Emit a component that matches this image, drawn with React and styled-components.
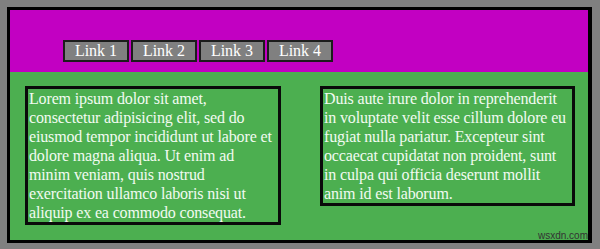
import React from 'react';
import styled, { createGlobalStyle } from 'styled-components';

const GlobalStyle = createGlobalStyle`
  html, body {
    margin: 0;
    padding: 0;
    background: #808080;
  }
  body {
    font-family: "Liberation Serif", "Times New Roman", serif;
  }
`;

const Page = styled.div`
  position: relative;
  width: 600px;
  height: 249px;
  padding: 7px;
  box-sizing: border-box;
`;

const Frame = styled.div`
  width: 585px;
  height: 236px;
  box-sizing: border-box;
  border: 3px solid #000;
  border-right-width: 4px;
  display: flex;
  flex-direction: column;
`;

const Header = styled.header`
  height: 62px;
  background: #c200c2;
  box-sizing: border-box;
  padding: 30px 0 0 53px;
`;

const Nav = styled.nav`
  display: flex;
  gap: 2px;
`;

const NavLink = styled.a`
  width: 66px;
  height: 22px;
  box-sizing: border-box;
  border: 2px solid #1c1c1c;
  background: #808080;
  color: #fff;
  font-family: "Liberation Serif", "Times New Roman", serif;
  font-size: 16px;
  line-height: 18px;
  text-align: center;
  text-decoration: none;
`;

const Content = styled.main`
  flex: 1;
  background: #4caf50;
  display: flex;
  justify-content: space-between;
  align-items: flex-start;
  padding: 14px 13px 0 15px;
`;

const Box = styled.div`
  width: ${props => props.$width}px;
  box-sizing: border-box;
  border: 3px solid #0a0a0a;
  padding: 0 0 0 1px;
  color: #f2fbf2;
  font-family: "Liberation Serif", "Times New Roman", serif;
  font-size: 16px;
  line-height: 19px;
  letter-spacing: -0.15px;
`;

const Watermark = styled.span`
  position: absolute;
  right: 12px;
  bottom: 8px;
  font-family: "Liberation Sans", Arial, sans-serif;
  font-size: 10px;
  line-height: 10px;
  color: #333;
`;

const links = ['Link 1', 'Link 2', 'Link 3', 'Link 4'];

export default function App() {
  return (
    <>
      <GlobalStyle />
      <Page>
        <Frame>
          <Header>
            <Nav>
              {links.map(l => (
                <NavLink key={l} href="#">{l}</NavLink>
              ))}
            </Nav>
          </Header>
          <Content>
            <Box $width={256}>
              Lorem ipsum dolor sit amet, consectetur adipisicing elit, sed do eiusmod tempor incididunt ut labore et dolore magna aliqua. Ut enim ad minim veniam, quis nostrud exercitation ullamco laboris nisi ut aliquip ex ea commodo consequat.
            </Box>
            <Box $width={255}>
              Duis aute irure dolor in reprehenderit in voluptate velit esse cillum dolore eu fugiat nulla pariatur. Excepteur sint occaecat cupidatat non proident, sunt in culpa qui officia deserunt mollit anim id est laborum.
            </Box>
          </Content>
        </Frame>
        <Watermark>wsxdn.com</Watermark>
      </Page>
    </>
  );
}
